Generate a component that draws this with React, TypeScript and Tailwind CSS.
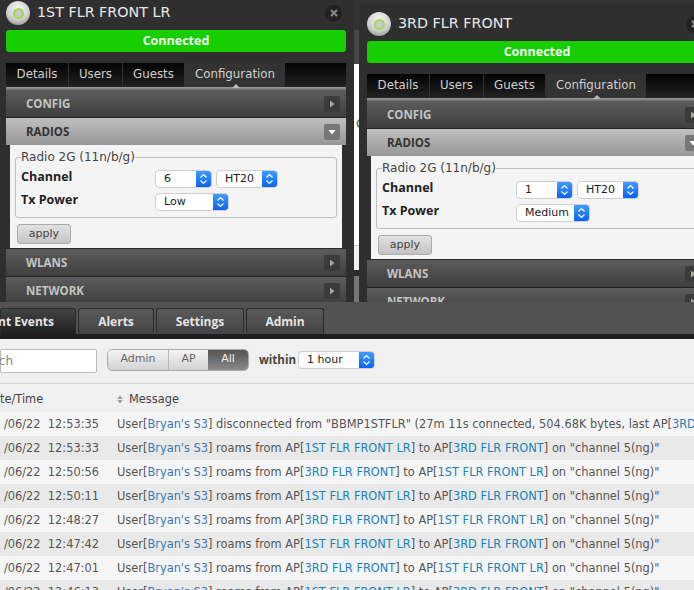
const font = "font-['DejaVu_Sans',sans-serif]";
const boldFont = "font-['Open_Sans',sans-serif] font-bold";

function Arrow({ open }: { open?: boolean }) {
  return (
    <div
      className={`flex h-4 w-4 items-center justify-center rounded-[2px] ${
        open ? 'bg-[#777777]' : 'bg-[#3b3b3b]'
      }`}
    >
      <svg width="8" height="8" viewBox="0 0 8 8">
        {open ? (
          <path d="M0.5 2 H7.5 L4 6.5 Z" fill="#ffffff" />
        ) : (
          <path d="M2 0.5 V7.5 L6.5 4 Z" fill="#a8a8a0" />
        )}
      </svg>
    </div>
  );
}

function SectionRow({ label, open }: { label: string; open?: boolean }) {
  return (
    <div
      className={`flex h-[27px] shrink-0 items-center justify-between pl-5 pr-1.5 text-[11.5px] ${boldFont} ${
        open
          ? 'bg-gradient-to-b from-[#c0c0c0] to-[#969696] text-[#333333]'
          : 'bg-gradient-to-b from-[#5c5c5c] to-[#3f3f3f] text-[#c4c4c4]'
      }`}
    >
      {label}
      <Arrow open={open} />
    </div>
  );
}

function Select({ value, width }: { value: string; width: string }) {
  return (
    <div className={`flex h-[18px] overflow-hidden rounded-[4px] border border-[#cfcfcf] bg-white text-[11px] text-[#222222] ${width}`}>
      <span className="flex-1 pl-2 leading-[16px]">{value}</span>
      <span className="flex w-[15px] items-center justify-center bg-gradient-to-b from-[#3f9bff] to-[#0a62ee]">
        <svg width="9" height="12" viewBox="0 0 9 12" fill="none" stroke="#ffffff" strokeWidth="1.2">
          <path d="M1.5 4.5 L4.5 1.5 L7.5 4.5" />
          <path d="M1.5 7.5 L4.5 10.5 L7.5 7.5" />
        </svg>
      </span>
    </div>
  );
}

function Orb() {
  return (
    <div className="flex h-6 w-6 shrink-0 items-center justify-center rounded-full bg-[radial-gradient(circle_at_50%_30%,#f4f4f4,#cfcfcf_55%,#7d7d7d)]">
      <div className="h-[11px] w-[11px] rounded-full border-2 border-[#a6d84a] bg-[#c9c9c9]" />
    </div>
  );
}

const tabs = [
  { label: 'Details', width: 'w-[63px]' },
  { label: 'Users', width: 'w-[54px]' },
  { label: 'Guests', width: 'w-[62px]' },
];

function ApWindow({ name, channel, power, position }: {
  name: string;
  channel: string;
  power: string;
  position: string;
}) {
  return (
    <div className={`absolute flex h-[331px] w-[356px] flex-col bg-[#2f2f2f] px-2 ${position}`}>
      {/* Title */}
      <div className="flex h-[37px] shrink-0 items-center gap-[7px] pt-[7px] pb-1">
        <Orb />
        <span className="flex-1 whitespace-nowrap text-[14.3px] text-[#e8e8e8]">{name}</span>
        <div className="mr-1 flex h-[17px] w-[17px] items-center justify-center rounded-full bg-[#222222] text-[#8a8a8a]">
          <svg width="8" height="8" viewBox="0 0 8 8" stroke="currentColor" strokeWidth="2">
            <path d="M1 1 L7 7 M7 1 L1 7" />
          </svg>
        </div>
      </div>

      <div className={`flex h-[22px] shrink-0 items-center justify-center rounded-[3px] bg-[#16ce00] text-[12.5px] text-[#f2fff0] ${boldFont}`}>
        Connected
      </div>

      {/* Tabs */}
      <div className="mt-[11px] flex h-[24px] shrink-0 bg-gradient-to-b from-[#050505] to-[#222222] text-[11.8px] text-[#d0d0d0]">
        {tabs.map((tab) => (
          <div key={tab.label} className={`flex items-center justify-center border-r border-[#333333] ${tab.width}`}>
            {tab.label}
          </div>
        ))}
        <div className="relative flex w-[100px] items-center justify-center bg-[#333333]">
          Configuration
          <div className="absolute -bottom-px left-[47px] h-0 w-0 border-x-[4px] border-b-[4px] border-x-transparent border-b-[#b8b8b8]" />
        </div>
      </div>
      <div className="h-[3px] shrink-0 bg-gradient-to-b from-[#a0a0a0] to-[#6a6a6a]" />

      <SectionRow label="CONFIG" />
      <div className="h-px shrink-0 bg-[#222222]" />
      <SectionRow label="RADIOS" open />

      {/* Radios panel */}
      <div className="mx-1 flex h-[103px] shrink-0 flex-col bg-[#f4f4f4] px-[5px] pt-1.5">
        <fieldset className="h-[67px] shrink-0 rounded-[3px] border border-[#bdbdbd] pl-[5px]">
          <legend className="text-[12px] leading-[12px] text-[#444444]">Radio 2G (11n/b/g)</legend>
          <div className="mt-[7px] flex h-[18px] items-start">
            <span className={`w-[134px] text-[12.5px] leading-[14px] text-[#222222] ${boldFont}`}>Channel</span>
            <Select value={channel} width="w-[57px]" />
            <div className="ml-1">
              <Select value="HT20" width="w-[62px]" />
            </div>
          </div>
          <div className="mt-[5px] flex h-[18px] items-start">
            <span className={`w-[134px] text-[12.5px] leading-[14px] text-[#222222] ${boldFont}`}>Tx Power</span>
            <Select value={power} width="w-[74px]" />
          </div>
        </fieldset>
        <div className="mt-[6px] ml-0.5 flex h-5 w-[54px] items-center justify-center rounded-[3px] border border-[#aaaaaa] bg-gradient-to-b from-[#e2e2e2] to-[#c4c4c4] text-[11px] text-[#444444]">
          apply
        </div>
      </div>

      <div className="h-px shrink-0 bg-[#2a2a2a]" />
      <SectionRow label="WLANS" />
      <div className="h-px shrink-0 bg-[#222222]" />
      <SectionRow label="NETWORK" />
    </div>
  );
}

function NavTab({ label, width, active }: { label: string; width: string; active?: boolean }) {
  return (
    <div
      className={`flex h-[26px] items-center rounded-t-[3px] border border-b-0 border-[#2a2a2a] text-[12px] text-[#e4e4e4] ${boldFont} ${width} ${
        active
          ? 'justify-end bg-gradient-to-b from-[#444444] to-[#1f1f1f] pr-[21px]'
          : 'justify-center bg-gradient-to-b from-[#5a5a5a] to-[#444444]'
      }`}
    >
      <span className="shrink-0 whitespace-nowrap">{label}</span>
    </div>
  );
}

function Ap({ name }: { name: string }) {
  return (
    <>
      AP[<span className="text-[#1b82b8]">{name}</span>]
    </>
  );
}

const FIRST = '1ST FLR FRONT LR';
const THIRD = '3RD FLR FRONT';

const roams = [
  { time: '12:53:33', from: FIRST, to: THIRD },
  { time: '12:50:56', from: THIRD, to: FIRST },
  { time: '12:50:11', from: FIRST, to: THIRD },
  { time: '12:48:27', from: THIRD, to: FIRST },
  { time: '12:47:42', from: FIRST, to: THIRD },
  { time: '12:47:01', from: THIRD, to: FIRST },
  { time: '12:46:13', from: FIRST, to: THIRD },
];

function EventRow({ time, shaded, children }: { time: string; shaded?: boolean; children: React.ReactNode }) {
  return (
    <div className={`flex h-6 shrink-0 items-center whitespace-nowrap pt-px text-[11.4px] text-[#555555] ${shaded ? 'bg-[#e9e9e9]' : 'bg-[#f5f5f5]'}`}>
      <div className="flex w-[117px] shrink-0 justify-end pr-[18px]">/06/22&nbsp;&nbsp;{time}</div>
      <div>
        User[<span className="text-[#3a78b8]">Bryan's S3</span>] {children}
      </div>
    </div>
  );
}

export default function App() {
  return (
    <div className={`flex h-[590px] w-[694px] flex-col overflow-hidden bg-[#f0f0f0] ${font}`}>
      {/* AP windows on top of the dimmed page */}
      <div className="relative h-[302px] shrink-0 overflow-hidden">
        <div className="flex h-full flex-col">
          <div className="h-[30px] bg-[#333333]" />
          <div className="h-[34px] bg-[#474747]" />
          <div className="h-[181px] bg-white pt-[51px] pl-[356px] text-[12px] text-[#555555]">C</div>
          <div className="flex-1 border-t border-[#cccccc] bg-[#f0f0f0]" />
          <div className="h-1.5 bg-[#2a2a2a]" />
          <div className="h-[26px] bg-[#777777]" />
        </div>
        <ApWindow name="1ST FLR FRONT LR" channel="6" power="Low" position="-left-0.5 -top-[7px]" />
        <ApWindow name="3RD FLR FRONT" channel="1" power="Medium" position="left-[359px] top-[4px]" />
      </div>

      {/* Nav */}
      <div className="flex h-[32px] shrink-0 items-end gap-[2px] bg-[#525252]">
        <NavTab label="Recent Events" width="w-[76px]" active />
        <NavTab label="Alerts" width="w-[76px]" />
        <NavTab label="Settings" width="w-[88px]" />
        <NavTab label="Admin" width="w-[78px]" />
      </div>
      <div className="h-[5px] shrink-0 bg-[#1f1f1f]" />

      {/* Filters */}
      <div className="flex h-[45px] shrink-0 items-center border-b border-[#d4d4d4] pb-[3px] text-[12px]">
        <div className="mt-[3px] flex h-6 w-[97px] shrink-0 items-center justify-end rounded-[2px] border border-[#bbbbbb] bg-white pr-[83px] text-[12px] whitespace-nowrap text-[#888888]">
          <span className="shrink-0">Search</span>
        </div>
        <div className="ml-[10px] flex h-[22px] w-[142px] overflow-hidden rounded-[5px] border border-[#aaaaaa] text-[11px] text-[#666666]">
          <div className="flex w-[61px] items-center justify-center border-r border-[#b8b8b8] bg-gradient-to-b from-[#f4f4f4] to-[#d4d4d4]">Admin</div>
          <div className="flex w-[39px] items-center justify-center bg-gradient-to-b from-[#f4f4f4] to-[#d4d4d4]">AP</div>
          <div className="flex flex-1 items-center justify-center bg-gradient-to-b from-[#555555] to-[#8a8a8a] text-[#eeeeee]">All</div>
        </div>
        <span className={`ml-[10px] w-[34px] text-[11.5px] text-[#444444] ${boldFont}`}>within</span>
        <div className="ml-[5px]">
          <Select value="1 hour" width="w-[77px]" />
        </div>
      </div>

      {/* Table header */}
      <div className="flex h-[28px] shrink-0 items-center pt-[3px] text-[11.4px] text-[#444444]">
        <div className="flex w-[117px] shrink-0">te/Time</div>
        <svg className="mr-[6px]" width="6" height="9" viewBox="0 0 7 9" fill="#8a8a8a">
          <path d="M3.5 0 L6.5 3.5 H0.5 Z M3.5 9 L0.5 5.5 H6.5 Z" />
        </svg>
        Message
      </div>

      <EventRow time="12:53:35">
        disconnected from "BBMP1STFLR" (27m 11s connected, 504.68K bytes, last <Ap name={THIRD} />
      </EventRow>
      {roams.map((r, i) => (
        <EventRow key={r.time} time={r.time} shaded={i % 2 === 0}>
          roams from <Ap name={r.from} /> to <Ap name={r.to} /> on "channel 5(ng)"
        </EventRow>
      ))}
    </div>
  );
}
